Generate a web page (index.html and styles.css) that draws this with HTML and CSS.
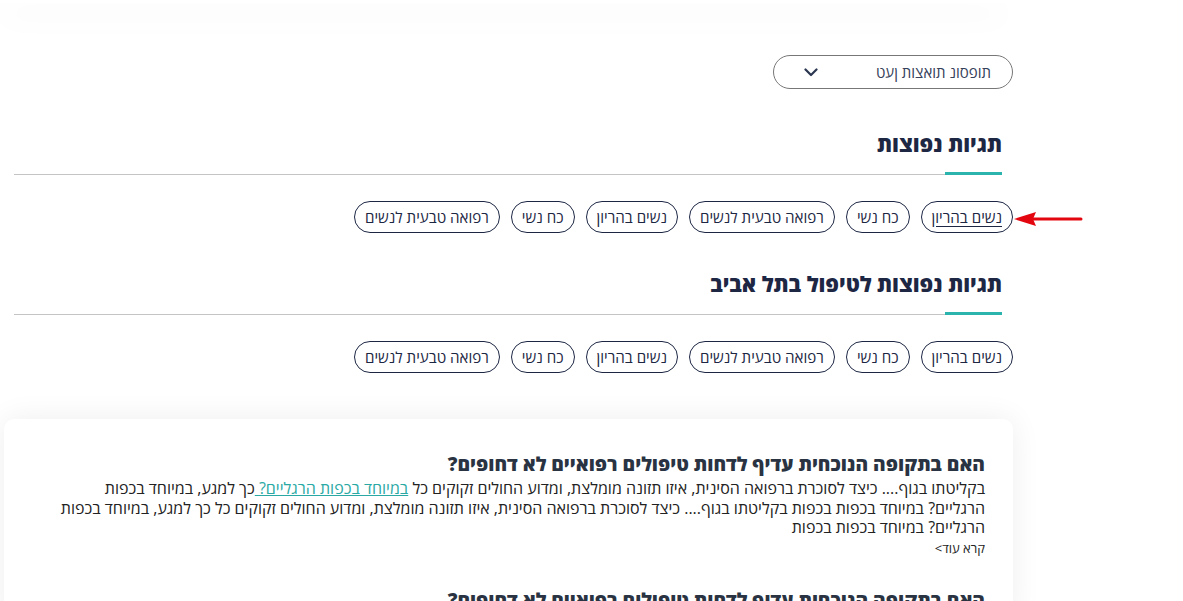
FILE: index.html
```html
<!DOCTYPE html>
<html lang="he" dir="rtl">
<head>
<meta charset="utf-8">
<link rel="stylesheet" href="styles.css">
</head>
<body>
<div class="top-card"></div>
<main class="page">
  <div class="load-row">
    <button class="load-more">
      <span class="load-text">תופסונ תואצות ןעט</span>
      <svg class="chev" width="14" height="9" viewBox="0 0 14 9"><path d="M1.5 1.5 L7 7 L12.5 1.5" fill="none" stroke="#2b3650" stroke-width="2.2" stroke-linecap="round" stroke-linejoin="round"/></svg>
    </button>
  </div>

  <section class="tags-section">
    <h2 class="sec-title">תגיות נפוצות</h2>
    <div class="rule"><span class="rule-accent"></span></div>
    <div class="tags">
      <a class="tag hover">נשים בהריון</a>
      <a class="tag">כח נשי</a>
      <a class="tag">רפואה טבעית לנשים</a>
      <a class="tag">נשים בהריון</a>
      <a class="tag">כח נשי</a>
      <a class="tag">רפואה טבעית לנשים</a>
      <svg class="arrow" width="70" height="16" viewBox="0 0 70 16"><path d="M68 8 L20 8" stroke="#e4060f" stroke-width="3" stroke-linecap="round"/><path d="M1 8 L23 1 L20 8 L23 15 Z" fill="#e4060f"/></svg>
    </div>
  </section>

  <section class="tags-section second">
    <h2 class="sec-title">תגיות נפוצות לטיפול בתל אביב</h2>
    <div class="rule"><span class="rule-accent"></span></div>
    <div class="tags">
      <a class="tag">נשים בהריון</a>
      <a class="tag">כח נשי</a>
      <a class="tag">רפואה טבעית לנשים</a>
      <a class="tag">נשים בהריון</a>
      <a class="tag">כח נשי</a>
      <a class="tag">רפואה טבעית לנשים</a>
    </div>
  </section>

  <div class="article-card">
    <article class="article">
      <h3 class="art-title">האם בתקופה הנוכחית עדיף לדחות טיפולים רפואיים לא דחופים?</h3>
      <p class="art-text">בקליטתו בגוף.... כיצד לסוכרת ברפואה הסינית, איזו תזונה מומלצת, ומדוע החולים זקוקים כל <a class="inline-link">במיוחד בכפות הרגליים? </a>כך למגע, במיוחד בכפות הרגליים? במיוחד בכפות בכפות בקליטתו בגוף.... כיצד לסוכרת ברפואה הסינית, איזו תזונה מומלצת, ומדוע החולים זקוקים כל כך למגע, במיוחד בכפות הרגליים? במיוחד בכפות בכפות</p>
      <a class="read-more">קרא עוד&gt;</a>
    </article>
    <article class="article">
      <h3 class="art-title">האם בתקופה הנוכחית עדיף לדחות טיפולים רפואיים לא דחופים?</h3>
    </article>
  </div>
</main>
</body>
</html>
```
FILE: styles.css
```css
* { box-sizing: border-box; }
html, body { margin: 0; padding: 0; background: #fff; }
body {
  font-family: "Open Sans", "DejaVu Sans", sans-serif;
  color: #1d2744;
  direction: rtl;
  overflow: hidden;
  height: 601px;
}
.top-card {
  width: 1006px;
  height: 3px;
  margin-left: 0;
  margin-right: auto;
  background: #fff;
  border-radius: 0 0 16px 16px;
  box-shadow: 0 12px 30px rgba(0, 0, 0, 0.11);
}
.page {
  width: 1014px;
  margin-right: auto;
  margin-left: 0;
  position: relative;
}
.load-row {
  display: flex;
  padding-top: 52px;
  padding-right: 1px;
}
.load-more {
  width: 240px;
  height: 34px;
  border: 1px solid #777;
  border-radius: 17px;
  background: #fff;
  display: flex;
  align-items: center;
  justify-content: space-between;
  padding: 0 21px 0 30px;
  font-family: inherit;
  font-size: 15px;
  color: #35415a;
  direction: rtl;
}
.load-text { line-height: 1; }
.chev { display: block; }
.tags-section { padding-top: 40px; }
.tags-section.second { padding-top: 36px; }
.sec-title {
  margin: 0;
  padding-right: 12px;
  font-size: 21.4px;
  font-weight: 800;
  line-height: 30px;
  color: #1d2744;
}
.rule {
  margin: 12px 12px 0 14px;
  height: 4px;
  border-bottom: 1px solid #c4c4c4;
  position: relative;
}
.rule-accent {
  position: absolute;
  right: 0;
  bottom: -1px;
  width: 57px;
  height: 3px;
  background: #2bb3ae;
}
.tags {
  display: flex;
  gap: 11px;
  padding: 26px 1px 0 0;
  position: relative;
}
.tag {
  display: inline-flex;
  align-items: center;
  height: 32px;
  padding: 0 10px;
  border: 1px solid #1d2744;
  border-radius: 16px;
  font-size: 15.15px;
  color: #1d2744;
  white-space: nowrap;
}
.tag.hover { text-decoration: underline; text-underline-offset: 3px; }
.arrow {
  position: absolute;
  right: -69px;
  top: 36px;
}
.article-card {
  margin: 46px 1px 0 4px;
  background: #fff;
  border-radius: 10px 10px 0 0;
  box-shadow: 0 0 30px rgba(0, 0, 0, 0.07);
  padding: 32px 28px 0 48px;
  height: 200px;
}
.article { margin-bottom: 30px; }
.art-title {
  margin: 0;
  font-size: 19.2px;
  font-weight: 800;
  line-height: 26px;
  color: #2a3342;
}
.art-text {
  margin: 2px 0 0;
  font-size: 16px;
  line-height: 19.5px;
  color: #222;
}
.inline-link { color: #2aa9a4; text-decoration: underline; }
.read-more {
  display: block;
  font-size: 13px;
  line-height: 18px;
  color: #222;
  margin-top: 1px;
}
```
